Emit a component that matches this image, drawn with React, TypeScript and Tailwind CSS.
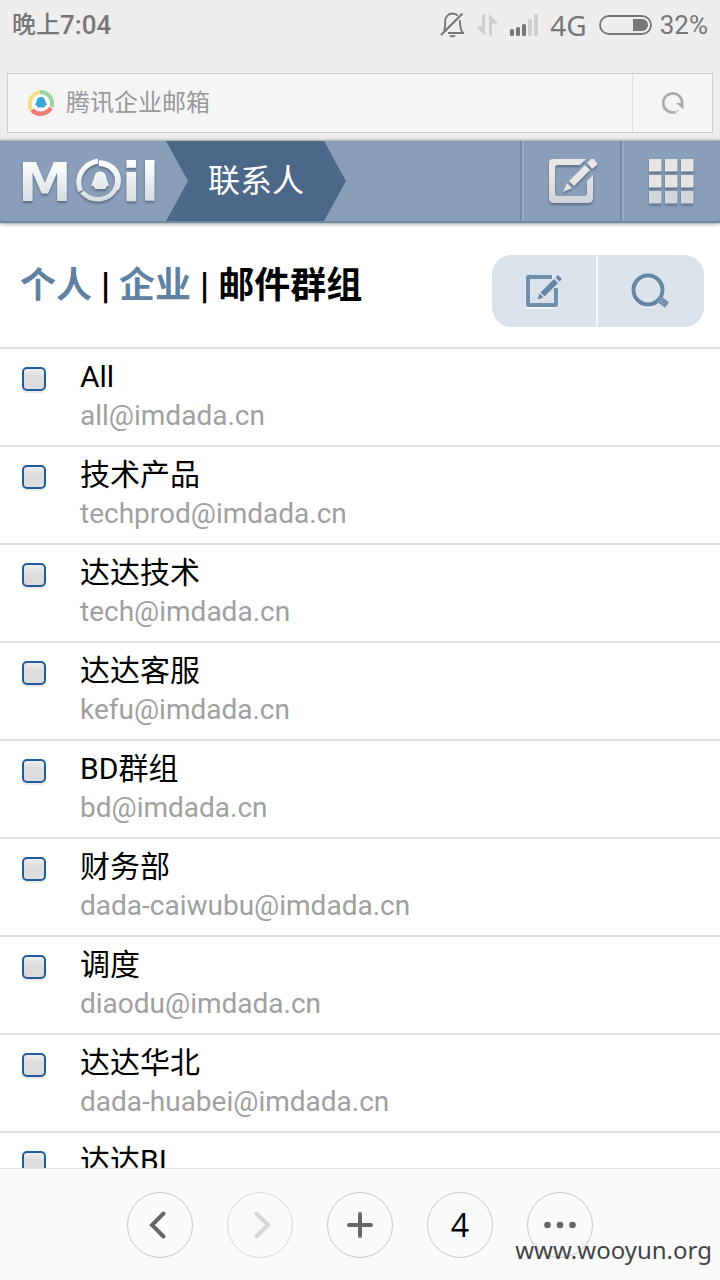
import type { ReactNode } from 'react';

const groups = [
  { name: 'All', email: 'all@imdada.cn' },
  { name: '技术产品', email: 'techprod@imdada.cn' },
  { name: '达达技术', email: 'tech@imdada.cn' },
  { name: '达达客服', email: 'kefu@imdada.cn' },
  { name: 'BD群组', email: 'bd@imdada.cn' },
  { name: '财务部', email: 'dada-caiwubu@imdada.cn' },
  { name: '调度', email: 'diaodu@imdada.cn' },
  { name: '达达华北', email: 'dada-huabei@imdada.cn' },
  { name: '达达BI', email: 'dada-bi@imdada.cn' },
];

function StatusBar() {
  return (
    <div className="flex h-[50px] items-center justify-between px-3 text-[#777]">
      <div className="flex items-center font-medium">
        <span className="text-2xl">晚上</span>
        <span className="text-[26px]">7:04</span>
      </div>
      <div className="flex items-center">
        <svg className="mr-3 h-[26px] w-6" viewBox="0 0 24 26" fill="none" stroke="#777" strokeWidth="1.9" aria-hidden="true">
          <path d="M4.2 18.5C5 16.5 5.2 14 5.2 9.5C5.2 4.500 8.500 1.500 12.500 1.500C14.500 1.500 16.500 2.300 17.800 3.700M19.800 8C20.200 12.500 19.500 17 23 21H8" />
          <path d="M1 23L22.500 1.500" strokeWidth="2.200" />
          <path d="M9.500 23.200a3 2 0 0 0 6 0z" fill="#777" stroke="none" />
        </svg>
        <svg className="mr-3 h-[22px] w-[22px]" viewBox="0 0 22 22" fill="#cfcfcf" aria-hidden="true">
          <path d="M6 2q0-2 1.500-2T9 2v20L0 12.500h6zM13 0l9 9.500h-6V20q0 2-1.500 2T13 20z" />
        </svg>
        <svg className="mr-3 h-[22px] w-7" viewBox="0 0 28 22" fill="#777" aria-hidden="true">
          <rect y="15" width="4" height="7" rx="1.500" />
          <rect x="6" y="13" width="4" height="9" rx="1.500" />
          <rect x="12" y="10" width="4" height="12" rx="1.500" />
          <rect x="18" y="5" width="4" height="17" rx="1.500" fill="#cfcfcf" />
          <rect x="24" width="4" height="22" rx="1.500" fill="#cfcfcf" />
        </svg>
        <span className="mr-3 font-['Noto_Sans',sans-serif] text-[28px] leading-9">4G</span>
        <svg className="mr-2 h-5 w-[53px]" viewBox="0 0 53 20" aria-hidden="true">
          <rect x="1" y="1" width="51" height="18" rx="9" fill="none" stroke="#777" strokeWidth="1.800" />
          <path d="M34 4h9a6 6 0 0 1 0 12h-9z" fill="#777" />
        </svg>
        <span className="text-[26px]">32%</span>
      </div>
    </div>
  );
}

function AddressBar() {
  return (
    <div className="px-[7px] pb-[7px] pt-[23px]">
      <div className="flex h-[60px] border border-[#cacaca] bg-[#f5f5f5]">
        <button type="button" className="flex flex-1 items-center gap-3 pl-5 text-left text-2xl text-[#999]">
          <svg className="h-[26px] w-[26px]" viewBox="0 0 26 26" fill="none" aria-hidden="true">
            <circle cx="13" cy="13" r="9" fill="#fff" />
            <path d="M3 20C-1 10 5 2.500 14 2" stroke="#f7de84" strokeWidth="4" />
            <path d="M12 2C21 2 25 9 24 17" stroke="#98d3a4" strokeWidth="4" />
            <path d="M23 18C18 25 9 25.500 4 20" stroke="#ee7a72" strokeWidth="4.500" />
            <path d="M13 7c3 0 4 2 4.500 4.500L19 15l-2 .5-.5 2H9.500l-.5-2-2-.5 1.500-3.500C9 9 10 7 13 7z" fill="#37a8dc" />
          </svg>
          <span>腾讯企业邮箱</span>
        </button>
        <button type="button" aria-label="刷新" className="flex w-20 items-center justify-center border-l border-[#dedede]">
          <svg className="h-[22px] w-[22px]" viewBox="0 0 22 22" fill="none" aria-hidden="true">
            <path d="M13.500 20A9.500 9.500 0 1 1 20 9" stroke="#aaa" strokeWidth="2.600" />
            <path d="M14 11H21.500V17.500z" fill="#aaa" />
            <path d="M20 8V12" stroke="#aaa" strokeWidth="2.600" />
            <path d="M13.500 20q2-.6 3.500-2" stroke="#d8d8d8" strokeWidth="2" />
          </svg>
        </button>
      </div>
    </div>
  );
}

function Logo() {
  return (
    <svg className="h-12 w-36 overflow-visible drop-shadow-[0_2px_1px_rgba(60,80,105,0.6)]" viewBox="0 0 144 48" role="img" aria-label="Mail">
      <defs>
        <linearGradient id="silver" gradientUnits="userSpaceOnUse" x1="0" y1="4" x2="0" y2="46">
          <stop offset="0" stopColor="#fff" />
          <stop offset="1" stopColor="#d3dce0" />
        </linearGradient>
      </defs>
      <g fill="url(#silver)" className="font-['DejaVu_Sans',sans-serif] text-[54px] font-bold">
        <text x="0" y="44">M</text>
        <text x="104" y="44">il</text>
        <path d="M82 14.500c4 0 6 3 6.500 7l2.500 7-2.500 1-1 2.500H77l-1-2.500-3-1 3-7c.5-4 2-7 6-7z" />
      </g>
      <g fill="none" stroke="url(#silver)">
        <path d="M81 6C96 7 104 19 98 32" strokeWidth="6" />
        <path d="M98 31C91 44.500 74 46 64 35" strokeWidth="4.500" />
        <path d="M62.500 34C57 20 65 7 80 4" strokeWidth="5" />
      </g>
    </svg>
  );
}

function Header() {
  return (
    <header className="relative flex h-[83px] shrink-0 border-t border-b-2 border-t-[#b3b7ba] border-b-[#6f89a5] bg-[#899eb8] shadow-[0_1px_4px_rgba(0,0,0,0.4)]">
      <a href="#home" className="flex w-[166px] items-center pl-[18px]">
        <Logo />
      </a>
      <h1 className="flex w-[180px] items-center justify-center bg-[#4c6888] text-[32px] text-white [clip-path:polygon(0_0,158px_0,180px_50%,158px_100%,0_100%,22px_50%)]">
        联系人
      </h1>
      <nav className="ml-auto flex">
        <button type="button" aria-label="写邮件" className="flex w-[100px] items-center justify-center border-l-2 border-[#728dac] shadow-[inset_2px_0_0_#98abc2]">
          <svg className="h-12 w-[50px] overflow-visible drop-shadow-[0_2px_1px_rgba(60,80,105,0.6)]" viewBox="-2 -1 50 48" aria-hidden="true">
            <defs>
              <linearGradient id="pale" x1="0" y1="0" x2="0" y2="1">
                <stop offset="0.300" stopColor="#e8e7e6" />
                <stop offset="1" stopColor="#cfd3d9" />
              </linearGradient>
            </defs>
            <path d="M5 1H38L32 7H10Q7 7 7 10V35Q7 38 10 38H36Q39 38 39 35V23L45 17V40Q45 45 40 45H5Q1 45 1 40V5Q1 1 5 1Z" fill="url(#pale)" />
            <path d="M37 7L42 12L26 28L21 23ZM39 5L43 1H46L49 5V7L44 11ZM19 25L24 30L15 34Z" fill="#e8e7e6" />
          </svg>
        </button>
        <button type="button" aria-label="菜单" className="flex w-[100px] items-center justify-center border-l-2 border-[#728dac] shadow-[inset_2px_0_0_#98abc2]">
          <svg className="h-12 w-[46px] overflow-visible drop-shadow-[0_2px_1px_rgba(60,80,105,0.6)]" viewBox="0 -1 46 48" aria-hidden="true">
            {[0, 16, 32].map((y) =>
              [0, 16, 32].map((x) => (
                <rect key={`${x}-${y}`} x={x + 1} y={y + 1} width="12.500" height="12.500" fill={y === 32 ? '#d2d5da' : '#e6e5e4'} />
              )),
            )}
          </svg>
        </button>
      </nav>
    </header>
  );
}

function Tabs() {
  return (
    <div className="flex items-start justify-between border-b-2 border-[#dcdfe4] pb-5 pl-5 pr-4 pt-8">
      <nav className="flex items-center gap-[9px] whitespace-nowrap text-4xl font-bold leading-[62px]">
        <a href="#personal" className="text-[#5f82a3]">个人</a>
        <span>|</span>
        <a href="#company" className="text-[#5f82a3]">企业</a>
        <span>|</span>
        <a href="#groups" aria-current="page">邮件群组</a>
      </nav>
      <div className="flex h-[72px] w-[212px] overflow-hidden rounded-[20px] bg-[#dae2eb]">
        <button type="button" aria-label="写邮件" className="flex w-1/2 items-center justify-center border-r-2 border-[#f5f8fa]">
          <svg className="h-9 w-9 overflow-visible" viewBox="1 0 36 36" aria-hidden="true">
            <path d="M28 4H3Q2 4 2 5V32Q2 34.500 3 34.500H30Q32 34.500 32 32V16" fill="none" stroke="#fff" strokeWidth="3" opacity=".6" />
            <path d="M27 4H3V32H31V15" fill="none" stroke="#6f8fad" strokeWidth="4" strokeLinejoin="round" />
            <path d="M29 6L33 10L19.500 23.500L15.500 19.500ZM30.500 4.500L33 2L37 6L34.500 8.500ZM14.500 20.500L18.500 24.500L12.500 26.500Z" fill="#6485a5" />
          </svg>
        </button>
        <button type="button" aria-label="搜索" className="flex w-1/2 items-center justify-center">
          <svg className="h-9 w-10 overflow-visible" viewBox="1 0 40 36" aria-hidden="true">
            <circle cx="18" cy="18.500" r="14.500" fill="none" stroke="#fff" strokeWidth="4" opacity=".5" />
            <circle cx="18" cy="17" r="14.500" fill="none" stroke="#6485a3" strokeWidth="4" />
            <path d="M29 26L37 32" stroke="#7594b4" strokeWidth="7" />
          </svg>
        </button>
      </div>
    </div>
  );
}

function GroupRow({ name, email }: { name: string; email: string }) {
  return (
    <li className="border-b-2 border-[#dedfe4]">
      <label className="flex h-24 items-start gap-[34px] pl-[22px] pt-2">
        <input
          type="checkbox"
          className="mt-2.5 size-6 shrink-0 appearance-none rounded-[5px] border-2 border-[#235b9e] bg-linear-to-b from-[#eee] to-[#dcdcdc] to-40% shadow-[0_2px_1px_#eaeaea]"
        />
        <span className="flex flex-col">
          <span className="text-3xl leading-10">{name}</span>
          <span className="text-[28px] leading-[38px] text-[#a0a0a0]">{email}</span>
        </span>
      </label>
    </li>
  );
}

function RoundButton({ label, disabled, children }: { label: string; disabled?: boolean; children: ReactNode }) {
  return (
    <button
      type="button"
      aria-label={label}
      disabled={disabled}
      className="flex size-[66px] items-center justify-center rounded-full border border-[#c8c8c8] text-[#666] disabled:border-[#d8d8d8] disabled:text-[#d5d5d5]"
    >
      {children}
    </button>
  );
}

function Toolbar() {
  return (
    <footer className="relative flex h-28 shrink-0 items-start justify-center gap-[34px] border-t border-[#dedede] bg-[#fafafa] pt-[23px]">
      <RoundButton label="后退">
        <svg className="size-8" viewBox="0 0 32 32" fill="none" stroke="currentColor" strokeWidth="4" strokeLinecap="round" aria-hidden="true">
          <path d="M19.500 4.500L8 16L19.500 27.500" />
        </svg>
      </RoundButton>
      <RoundButton label="前进" disabled>
        <svg className="size-8" viewBox="0 0 32 32" fill="none" stroke="currentColor" strokeWidth="4" strokeLinecap="round" aria-hidden="true">
          <path d="M12.500 4.500L24 16L12.500 27.500" />
        </svg>
      </RoundButton>
      <RoundButton label="新建">
        <svg className="size-8" viewBox="0 0 32 32" fill="none" stroke="currentColor" strokeWidth="4" strokeLinecap="round" aria-hidden="true">
          <path d="M16 5V27M5 16H27" />
        </svg>
      </RoundButton>
      <RoundButton label="窗口">
        <span className="font-['Open_Sans',sans-serif] text-[32px] leading-none text-black">4</span>
      </RoundButton>
      <RoundButton label="更多">
        <svg className="h-2 w-8" viewBox="0 0 32 8" fill="currentColor" aria-hidden="true">
          <circle cx="3.500" cy="4" r="3.300" />
          <circle cx="16" cy="4" r="3.300" />
          <circle cx="28.500" cy="4" r="3.300" />
        </svg>
      </RoundButton>
      <span className="absolute bottom-3.5 right-2 font-['Noto_Sans',sans-serif] text-2xl text-[#444]">www.wooyun.org</span>
    </footer>
  );
}

export default function App() {
  return (
    <div className="flex h-screen flex-col bg-white font-['Roboto','Noto_Sans_CJK_SC',sans-serif] text-black">
      <div className="shrink-0 bg-[#eee]">
        <StatusBar />
        <AddressBar />
      </div>
      <Header />
      <main className="min-h-0 flex-1 overflow-hidden">
        <Tabs />
        <ul>
          {groups.map((group) => (
            <GroupRow key={group.email} name={group.name} email={group.email} />
          ))}
        </ul>
      </main>
      <Toolbar />
    </div>
  );
}
